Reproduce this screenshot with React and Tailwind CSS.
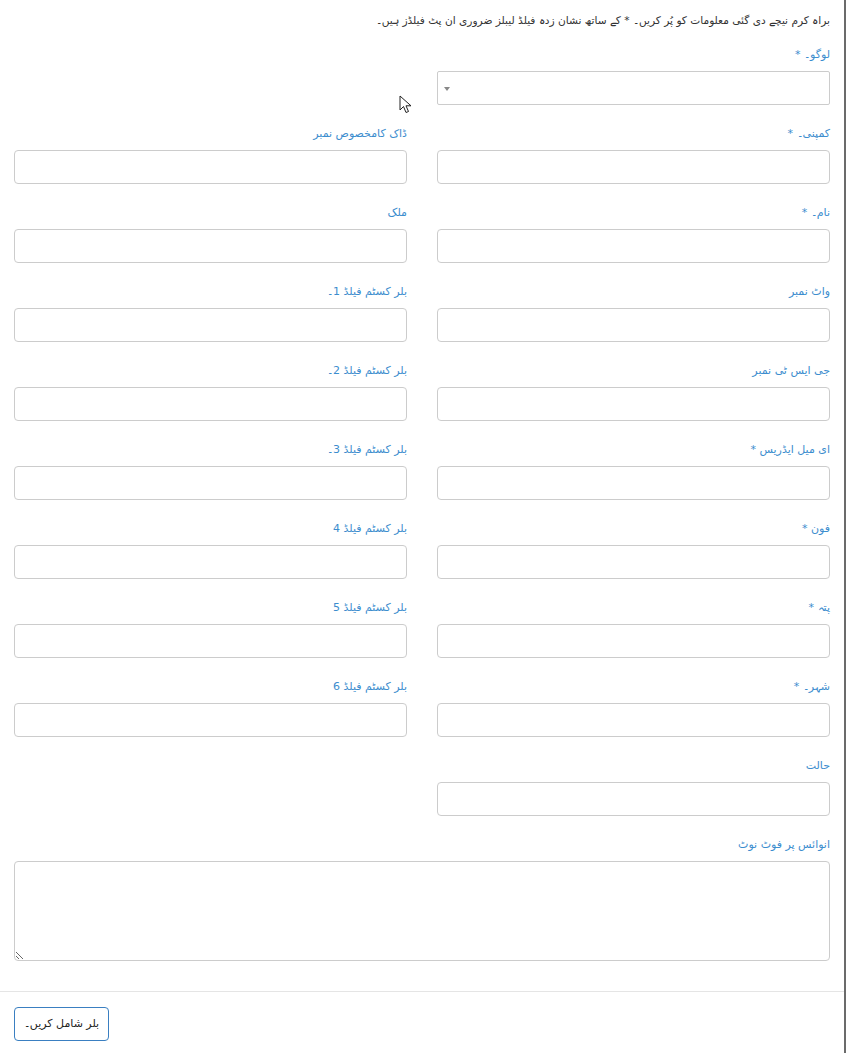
import React from 'react';

// Two-column Urdu (RTL) biller form

const FONT = { fontFamily: '"DejaVu Sans", "Liberation Sans", sans-serif' };

const FIELDS = [
    ['کمپنی۔ *', 'ڈاک کامخصوص نمبر'],
    ['نام۔ *', 'ملک'],
    ['واٹ نمبر', 'بلر کسٹم فیلڈ 1۔'],
    ['جی ایس ٹی نمبر', 'بلر کسٹم فیلڈ 2۔'],
    ['ای میل ایڈریس *', 'بلر کسٹم فیلڈ 3۔'],
    ['فون *', 'بلر کسٹم فیلڈ 4'],
    ['پتہ *', 'بلر کسٹم فیلڈ 5'],
    ['شہر۔ *', 'بلر کسٹم فیلڈ 6'],
    ['حالت', null],
];

const Label = ({ children }) => (
    <label className="block text-[11px] leading-[17px] text-[#3c8dce] mb-[8px]">{children}</label>
);

const Field = ({ label }) => (
    <div>
        <Label>{label}</Label>
        <input type="text" className="block w-full h-[34px] border border-[#cccccc] rounded-[4px] bg-white outline-none" />
    </div>
);

const Cursor = () => (
    <svg className="absolute left-[399px] top-[95px]" width="14" height="20" viewBox="0 0 14 20">
        <path d="M1 1 L1 15 L4.5 11.5 L7 17.5 L9.5 16.5 L7 10.8 L12 10.8 Z" fill="#ffffff" stroke="#222222" strokeWidth="1" strokeLinejoin="round" />
    </svg>
);

const App = () => {
    return (
        <div dir="rtl" style={FONT} className="relative w-[846px] min-h-[1053px] bg-white text-[#333333] border-r-2 border-[#6b6b6b]">
            <div className="pt-[12px] pr-[14px] pl-[14px]">
                <p className="text-[10.6px] leading-[17px] mb-[17px]">
                    براہ کرم نیچے دی گئی معلومات کو پُر کریں۔ * کے ساتھ نشان زدہ فیلڈ لیبلز ضروری ان پٹ فیلڈز ہیں۔
                </p>

                <div className="grid grid-cols-2 gap-x-[30px] gap-y-[20px]">
                    <div>
                        <Label>لوگو۔ *</Label>
                        <div className="relative h-[34px] border border-[#cccccc] rounded-[2px] bg-white">
                            <span className="absolute left-[6px] top-[15px] w-0 h-0 border-l-[3px] border-r-[3px] border-t-[4px] border-l-transparent border-r-transparent border-t-[#888888]" />
                        </div>
                    </div>
                    <div />

                    {FIELDS.map(([right, left], i) => (
                        <React.Fragment key={i}>
                            <Field label={right} />
                            {left ? <Field label={left} /> : <div />}
                        </React.Fragment>
                    ))}

                    <div className="col-span-2">
                        <Label>انوائس پر فوٹ نوٹ</Label>
                        <textarea className="block w-full h-[100px] border border-[#cccccc] rounded-[4px] bg-white outline-none resize-y" />
                    </div>
                </div>
            </div>

            <div className="mt-[30px] border-t border-[#e5e5e5] pt-[15px] pb-[13px] pl-[14px] flex justify-end">
                <button className="h-[34px] w-[95px] border border-[#3a7fc1] rounded-[4px] bg-white text-[11px] text-[#222222]">
                    بلر شامل کریں۔
                </button>
            </div>

            <Cursor />
        </div>
    );
};

export default App;
